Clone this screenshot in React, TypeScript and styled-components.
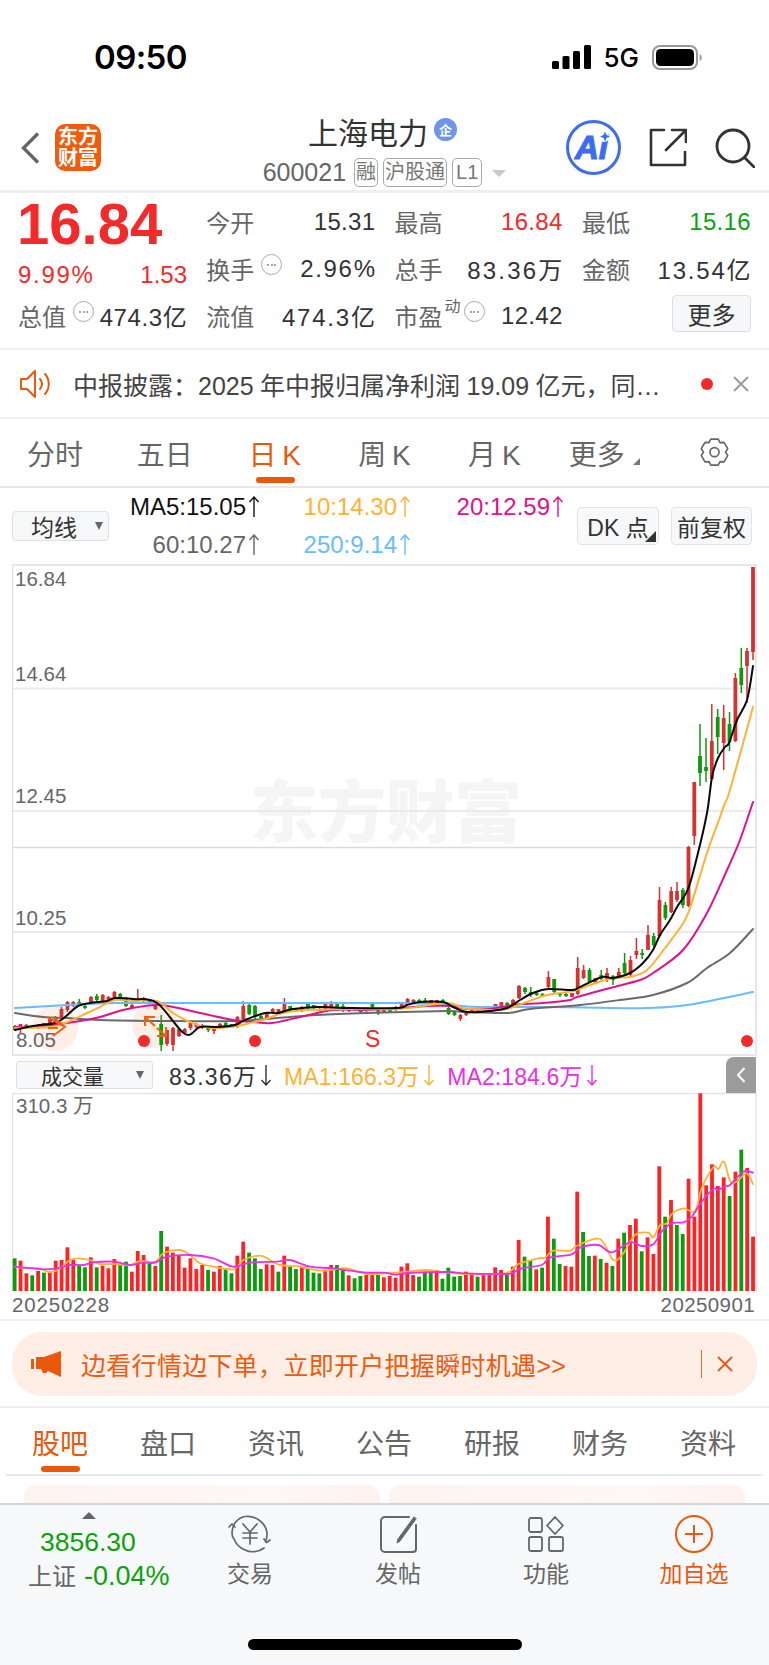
import React from 'react';
import styled, { createGlobalStyle } from 'styled-components';

const FONT = '"Liberation Sans", "Noto Sans CJK SC", sans-serif';
const ORANGE = '#ea580c';
const RED = '#f22a2a';
const GREEN = '#0aa30a';

const Global = createGlobalStyle`
  html, body { margin: 0; padding: 0; background: #fff; }
  * { box-sizing: border-box; }
  #root { width: 769px; height: 1665px; overflow: hidden; }
`;

const Page = styled.div`
  width: 769px; height: 1665px; display: flex; flex-direction: column;
  font-family: ${FONT}; color: #333; background: #fff; overflow: hidden;
`;

const StatusBar = styled.div`
  height: 100px; padding: 14px 67px 0 94px; display: flex; align-items: center; justify-content: space-between; flex: none;
`;
const Clock = styled.div`font: 600 33px Inter, sans-serif; color: #000; letter-spacing: -0.6px;`;
const StatusRight = styled.div`display: flex; align-items: center; gap: 12px;`;
const NetLabel = styled.div`font: 500 26px Inter, sans-serif; color: #000; margin-right: 1px;`;

const Header = styled.div`
  height: 93px; display: grid; grid-template-columns: 1fr auto 1fr; align-items: center; flex: none;
  border-bottom: 3px solid #eeeff1;
`;
const HeaderLeft = styled.div`display: flex; align-items: center; gap: 15px; padding: 5px 0 0 21px;`;
const Logo = styled.div`
  width: 46px; height: 47px; border-radius: 10px; background: #f25a0c; color: #fff;
  font-size: 20px; line-height: 21px; font-weight: 700; display: flex; align-items: center; justify-content: center;
  text-align: center;
`;
const HeaderCenter = styled.div`
  align-self: start; padding-top: 11px; display: flex; flex-direction: column; align-items: center; gap: 6px;
`;
const TitleRow = styled.div`display: flex; align-items: center; gap: 6px; height: 40px; margin-left: -4px;`;
const Title = styled.div`font-size: 30px; color: #333;`;
const EntBadge = styled.div`
  width: 23px; height: 23px; border-radius: 50%; background: #6d95e8; color: #fff; font-size: 13px; font-weight: 700;
  display: flex; align-items: center; justify-content: center; margin-top: -3px;
`;
const SubRow = styled.div`display: flex; align-items: center; gap: 5px; height: 30px;`;
const Code = styled.div`font-size: 25px; color: #666; margin-right: 3px;`;
const Tag = styled.div<{ $wide?: boolean }>`
  height: 29px; padding: 0 ${p => (p.$wide ? 3 : 1)}px; border: 1px solid #a9a9a9; border-radius: 5px; font-size: 20px; color: #777;
  display: flex; align-items: center; justify-content: center; line-height: 1;
`;
const SubCaret = styled.div`
  width: 0; height: 0; margin-left: 5px; margin-top: 3px;
  border-left: 7px solid transparent; border-right: 7px solid transparent; border-top: 7px solid #c8c8c8;
`;
const HeaderRight = styled.div`display: flex; justify-content: flex-end; align-items: center; gap: 28px; padding: 5px 14px 0 0;`;

const Quote = styled.div`
  height: 157px; padding: 5px 0 0 18px; display: grid; grid-template-columns: 169px 169px 168px 169px; column-gap: 19.3px; flex: none;
  grid-template-rows: repeat(3, 47px); border-bottom: 2px solid #eeeff1;
`;
const PriceBlock = styled.div`grid-row: span 2; display: flex; flex-direction: column;`;
const Price = styled.div`font-size: 58px; line-height: 52px; font-weight: 700; color: ${RED}; margin-left: -1px;`;
const ChangeRow = styled.div`
  display: flex; justify-content: space-between; margin-top: 10px; height: 30px; line-height: 30px;
  font-size: 24px; color: ${RED};
`;
const Stat = styled.div`display: flex; justify-content: space-between; align-items: center; white-space: nowrap;`;
const StatLabel = styled.div`font-size: 24px; color: #666; display: flex; align-items: flex-start; position: relative;`;
const StatValue = styled.div<{ $color?: string }>`font-size: 24px; letter-spacing: 0.3px; color: ${p => p.$color || '#333'};`;
const Digits = styled.span<{ $s: number }>`letter-spacing: ${p => p.$s}px;`;
const Sup = styled.span`font-size: 16px; color: #666; line-height: 16px; margin-top: 1px; margin-left: 2px;`;
const DotsCircle = styled.span<{ $ml?: number }>`
  width: 21px; height: 21px; border: 1.5px solid #aaa; border-radius: 50%; display: inline-flex; align-items: center;
  justify-content: center; gap: 1.5px; margin: 3px 0 0 ${p => p.$ml ?? 7}px;
  i { width: 2px; height: 2px; background: #888; border-radius: 50%; display: block; }
`;
const MoreCell = styled.div`display: flex; justify-content: flex-end; align-items: center;`;
const MoreBtn = styled.div`
  width: 79px; height: 37px; margin-top: -5px; background: #f6f7f9; border: 1px solid #dedfe3; border-radius: 4px;
  font-size: 24px; color: #333; display: flex; align-items: center; justify-content: center;
`;

const Notice = styled.div`
  height: 69px; padding: 0 20px; display: flex; align-items: center; border-bottom: 2px solid #eeeff1; flex: none;
`;
const NoticeText = styled.div`font-size: 25px; word-spacing: -0.5px; color: #444; margin-left: 21px; flex: 1; white-space: pre;`;
const NoticeDot = styled.div`width: 12px; height: 12px; border-radius: 50%; background: ${RED}; margin-right: 20px;`;

const Periods = styled.div`
  height: 69px; display: grid; grid-template-columns: repeat(7, 1fr); border-bottom: 2px solid #e6e7ea; flex: none;
`;
const Period = styled.div<{ $active?: boolean }>`
  position: relative; display: flex; align-items: center; justify-content: center; padding-top: 1px;
  font-size: 28px; word-spacing: -2px; white-space: pre; color: ${p => (p.$active ? ORANGE : '#666')};
  ${p => p.$active && `&::after { content: ''; position: absolute; left: 36px; bottom: 3px; width: 39px; height: 6px; border-radius: 3px; background: ${ORANGE}; }`}
`;
const CornerMark = styled.span`
  width: 0; height: 0; margin: 17px 0 0 8px; border-left: 7px solid transparent; border-bottom: 7px solid #777;
`;

const MaBar = styled.div`height: 76px; padding-left: 12px; display: flex; align-items: center; flex: none;`;
const SelectBox = styled.div<{ $w: number }>`
  width: ${p => p.$w}px; height: 30px; background: #f7f8fa; border: 1px solid #dfe0e4; border-radius: 4px;
  display: flex; align-items: center; justify-content: space-between; padding: 0 5px 0 18px; color: #333; font-size: 23px;
`;
const Caret = styled.span`
  width: 0; height: 0; border-left: 4.5px solid transparent; border-right: 4.5px solid transparent; border-top: 8px solid #666;
`;
const MaGrid = styled.div`
  display: grid; grid-template-columns: 151px 151px 153px; grid-auto-rows: 38px; align-items: center; justify-items: end;
  margin-right: 13px;
`;
const MaItem = styled.div<{ $color: string }>`
  display: flex; align-items: center; gap: 2px; font-size: 24px; color: ${p => p.$color}; white-space: nowrap;
`;
const ToolBtn = styled.div<{ $w: number }>`
  position: relative; width: ${p => p.$w}px; height: 38px; background: #f7f8fa; border: 1px solid #e2e3e6; border-radius: 4px; margin-right: 12px;
  font-size: 23px; color: #333; display: flex; align-items: center; justify-content: center; white-space: nowrap;
`;
const BtnCorner = styled.span`
  position: absolute; right: 2px; bottom: 2px; width: 0; height: 0;
  border-left: 11px solid transparent; border-bottom: 11px solid #333;
`;

const ChartWrap = styled.div`margin-left: 12px; width: 745px; height: 492px; flex: none;`;
const ChartSvg = styled.svg`display: block;`;
const VolBar = styled.div`
  position: relative; height: 37px; padding-left: 16px; display: flex; align-items: center; gap: 16px; flex: none;
`;
const VolSelect = styled(SelectBox)`padding: 0 8px 0 24px; height: 28px; font-size: 21px; border-radius: 3px;`;
const VolItem = styled(MaItem)`gap: 4px; margin-right: -4px; font-size: 23px;`;
const Handle = styled.div`
  position: absolute; right: 13px; top: 1px; width: 30px; height: 36px; background: #9b9b9b; border-radius: 8px 0 0 0;
  display: flex; align-items: center; justify-content: center;
`;
const VolWrap = styled.div`margin-left: 12px; width: 745px; height: 198px; flex: none;`;
const Dates = styled.div`
  height: 30px; padding: 0 14px 0 12px; display: flex; justify-content: space-between; align-items: center;
  font-size: 20.5px; color: #666; letter-spacing: 0.85px; border-bottom: 2px solid #eeeff1; flex: none;
`;
const DateEnd = styled.span`letter-spacing: 0.4px;`;

const AdSection = styled.div`height: 87px; padding: 11px 12px 0; border-bottom: 2px solid #eeeff1; flex: none;`;
const AdBanner = styled.div`
  height: 64px; border-radius: 30px; background: #feeee6; padding: 0 24px 0 19px; display: flex; align-items: center; color: #ee5a0e;
`;
const AdText = styled.div`font-size: 25px; margin-left: 19px; flex: 1; letter-spacing: 0.3px;`;
const AdLine = styled.div`width: 1px; height: 28px; background: #e86a2a; margin-right: 15px;`;

const InfoTabs = styled.div`
  height: 68px; margin: 0 6px; display: grid; grid-template-columns: repeat(7, 108px); border-bottom: 2px solid #e8e9ee; flex: none;
`;
const InfoTab = styled.div<{ $active?: boolean }>`
  position: relative; display: flex; align-items: center; justify-content: center; padding-top: 1px; font-size: 28px;
  color: ${p => (p.$active ? ORANGE : '#666')};
  ${p => p.$active && `&::after { content: ''; position: absolute; left: 35px; bottom: 2px; width: 39px; height: 6px; border-radius: 3px; background: ${ORANGE}; }`}
`;
const Peek = styled.div`height: 27px; padding: 9px 24px 0; display: flex; gap: 9px; overflow: hidden; flex: none;`;
const PeekCard = styled.div`flex: 1; height: 60px; border-radius: 12px; background: linear-gradient(90deg, #fff3ef, #fff8f6 70%, #fff1ee);`;

const BottomBar = styled.div`
  flex: 1; position: relative; background: #f7f8fa; border-top: 2px solid #d4d5d9; display: flex; padding-top: 7px;
`;
const Market = styled.div`width: 176px; padding-left: 28px; display: flex; flex-direction: column; align-items: flex-start; white-space: nowrap;`;
const UpTri = styled.div`
  width: 0; height: 0; margin-left: 54px; border-left: 7px solid transparent; border-right: 7px solid transparent; border-bottom: 7px solid #666;
`;
const MarketPrice = styled.div`font-size: 26.5px; color: ${GREEN}; margin: 8px 0 0 12px; line-height: 30px;`;
const MarketRow = styled.div`font-size: 24px; color: #666; margin-top: 4px; line-height: 30px;`;
const MarketPct = styled.span`font-size: 27px; color: ${GREEN}; margin-left: 8px;`;
const NavItem = styled.div<{ $active?: boolean }>`
  width: 148px; display: flex; flex-direction: column; align-items: center; padding-top: 3px;
  font-size: 23px; color: ${p => (p.$active ? ORANGE : '#666')};
`;
const NavIcon = styled.div`height: 38px; display: flex; align-items: center; justify-content: center; margin-bottom: 2px;`;
const HomeBar = styled.div`
  position: absolute; left: 248px; top: 134px; width: 274px; height: 11px; border-radius: 6px; background: #000;
`;

/* ------------ chart data ---------- */
type C = [number, 'r' | 'g', number, number, number, number];
const candles: C[] = [
  [15,'g',1025,1026,1030,1031],[20.5,'r',1024,1024,1029,1034],[26.4,'r',1024,1025,1028,1029],[32,'g',1025,1026,1028,1029],
  [38,'r',1024,1025,1027,1029],[44,'g',1023,1023,1025,1026],[50,'r',1018,1019,1025,1026],[55.5,'r',1016,1017,1024,1026],
  [61.5,'r',1007,1009,1018,1019],[67.5,'r',1001,1002,1010,1012],[73.3,'r',1001,1002,1006,1007],[79.2,'g',999,1002,1005,1006],
  [85,'g',1005,1006,1008,1009],[91,'r',996,997,1003,1004],[96.8,'g',994,996,1000,1002],[102.7,'r',994,995,1001,1002],
  [108.5,'r',996,997,1001,1002],[114.4,'r',991,992,997,999],[120.2,'g',993,994,998,999],[126,'g',997,998,1006,1007],
  [132,'r',1004,1005,1008,1009],[137.8,'r',989,999,1001,1001],[143.7,'r',997,998,1001,1002],[149.5,'g',999,1000,1003,1004],
  [155.4,'r',1005,1005,1009,1010],[161.2,'g',1015,1024,1045,1051],[167,'r',1030,1030,1044,1046],[173,'r',1027,1028,1045,1051],
  [179,'r',1028,1029,1036,1037],[184.7,'r',1028,1029,1033,1034],[190.5,'r',1022,1023,1028,1030],[196.4,'r',1023,1024,1027,1029],
  [202.3,'r',1024,1025,1027,1029],[208.2,'g',1027,1028,1030,1032],[214,'r',1028,1028,1031,1034],[220,'r',1023,1024,1028,1029],
  [225.7,'g',1021,1023,1026,1027],[231.6,'g',1024,1024,1026,1027],[237.4,'r',1016,1017,1026,1028],[243.3,'r',1001,1006,1019,1020],
  [249.2,'g',1004,1005,1014,1015],[255,'g',1005,1006,1017,1019],[261,'g',1015,1016,1018,1019],[266.8,'r',1012,1013,1018,1019],
  [272.7,'r',1008,1009,1013,1014],[278.5,'r',1009,1009,1013,1014],[284.4,'r',998,1004,1011,1012],[290.2,'g',1006,1006,1010,1011],
  [296,'g',1008,1008,1011,1012],[302,'r',1006,1007,1011,1012],[307.9,'g',1003,1004,1008,1009],[313.7,'g',1005,1005,1008,1009],
  [319.6,'r',1008,1009,1010,1011],[325.4,'r',1003,1004,1010,1011],[331.3,'r',1001,1004,1008,1010],[337.2,'g',1004,1004,1010,1011],
  [343,'g',1004,1006,1010,1012],[349,'r',1009,1009,1011,1012],[354.8,'g',1007,1007,1010,1010],[360.7,'g',1010,1010,1012,1013],
  [366.5,'r',1007,1008,1011,1012],[372.4,'g',1004,1004,1007,1008],[378.2,'g',1010,1010,1013,1015],[384,'r',1010,1010,1012,1013],
  [390,'g',1010,1010,1012,1013],[395.8,'r',1006,1007,1010,1011],[401.7,'r',1002,1004,1008,1009],[407.6,'r',998,999,1003,1004],
  [413.5,'r',999,1000,1003,1004],[419.3,'g',999,1000,1002,1003],[425.2,'g',998,1000,1002,1003],[431,'r',1000,1000,1003,1003],
  [437,'r',1000,1000,1003,1004],[442.8,'g',999,1000,1002,1003],[448.6,'g',1007,1008,1014,1015],[454.5,'g',1012,1012,1015,1016],
  [460.4,'r',1014,1015,1019,1021],[466.2,'r',1012,1012,1015,1016],[472,'r',1008,1009,1011,1012],[478,'g',1009,1009,1011,1011],
  [483.8,'g',1010,1010,1012,1012],[489.7,'r',1010,1010,1012,1012],[495.5,'r',1004,1004,1007,1008],[501.4,'r',1002,1002,1006,1006],
  [507.2,'g',1002,1003,1006,1007],[513,'r',999,1000,1005,1006],[519,'r',985,986,998,999],[525,'g',987,988,992,994],
  [530.8,'g',987,992,995,997],[536.6,'g',991,993,995,996],[542.5,'g',993,994,996,997],[548.4,'r',971,977,987,988],
  [554.2,'g',979,979,992,993],[560,'g',993,993,995,997],[566,'g',993,994,996,997],[572,'r',993,993,997,997],
  [577.7,'r',957,968,994,995],[583.6,'r',965,970,978,979],[589.5,'g',968,970,982,983],[595.4,'r',978,978,983,984],
  [601.2,'g',970,975,979,980],[607,'r',968,973,980,982],[613,'g',975,976,980,985],[618.8,'r',968,972,976,977],
  [624.6,'g',953,963,973,974],[630.5,'r',956,960,975,976],[636.4,'r',938,951,955,959],[642.2,'g',949,953,955,959],
  [648,'r',925,935,950,950],[653.7,'g',933,936,945,947],[659.5,'r',887,900,936,937],[665.4,'g',902,905,918,920],
  [671.2,'r',887,891,912,913],[677,'r',882,891,900,902],[682.9,'g',888,890,905,908],[688.5,'r',846,847,906,907],
  [694.3,'r',782,782,836,845],[700,'g',724,756,773,786],[706,'g',738,767,771,782],[711.8,'r',704,741,779,780],
  [717.7,'g',709,717,737,754],[723.7,'r',705,718,743,770],[729.5,'g',712,724,742,751],[735.4,'r',673,678,741,742],
  [741.3,'g',648,668,685,693],[747,'r',648,651,666,703],[753,'r',567,567,652,660],
];
type P = [number, number];
const smooth = (p: P[]) => {
  let d = `M${p[0][0]} ${p[0][1]}`;
  for (let i = 0; i < p.length - 1; i++) {
    const a = p[Math.max(i - 1, 0)], b = p[i], c = p[i + 1], e = p[Math.min(i + 2, p.length - 1)];
    const c1x = b[0] + (c[0] - a[0]) / 6, c1y = b[1] + (c[1] - a[1]) / 6;
    const c2x = c[0] - (e[0] - b[0]) / 6, c2y = c[1] - (e[1] - b[1]) / 6;
    d += `C${c1x.toFixed(1)} ${c1y.toFixed(1)} ${c2x.toFixed(1)} ${c2y.toFixed(1)} ${c[0].toFixed(1)} ${c[1].toFixed(1)}`;
  }
  return d;
};
const ma5: P[] = [[15,1030],[33,1026],[55,1023],[65,1017],[78,1006],[90,1003],[107,1001],[115,998],[133,999],[157,1003],[185,1034],[200,1027],[217,1027],[235,1025],[245,1020],[265,1013],[278,1013],[293,1009],[317,1007],[350,1008],[397,1008],[407,1005],[420,1002],[443,1002],[453,1007],[467,1012],[490,1011],[507,1008],[520,1000],[533,993],[548,989],[572,990],[580,987],[602,977],[613,978],[630,973],[643,963],[653,950],[660,935],[670,920],[677,907],[688,889],[697,857],[707,813],[712,777],[718,758],[725,747],[729,743],[737,720],[747,700],[753,666]];
const ma10: P[] = [[15,1028],[50,1027],[65,1023],[87,1013],[100,1007],[115,1000],[133,1001],[157,1001],[173,1013],[190,1022],[210,1028],[237,1026],[250,1023],[263,1020],[283,1013],[307,1010],[350,1009],[400,1009],[447,1003],[463,1008],[490,1010],[507,1009],[527,1002],[547,995],[573,991],[590,985],[613,978],[630,977],[647,970],[665,948],[682,925],[690,908],[707,853],[720,817],[725,803],[730,790],[753,707]];
const ma20: P[] = [[15,1027],[33,1027],[67,1023],[100,1017],[123,1010],[155,1005],[173,1007],[200,1013],[233,1020],[253,1022],[272,1023],[300,1017],[333,1010],[367,1010],[400,1008],[427,1006],[450,1006],[467,1009],[490,1009],[513,1005],[543,1003],[570,1000],[577,997],[610,988],[640,980],[653,973],[683,950],[707,913],[727,870],[740,840],[753,802]];
const ma60: P[] = [[15,1013],[43,1017],[67,1018],[100,1020],[167,1021],[233,1021],[277,1018],[317,1015],[367,1013],[447,1011],[463,1012],[507,1013],[530,1009],[580,1005],[620,1000],[653,995],[687,983],[707,968],[730,953],[753,929]];
const ma250: P[] = [[15,1008],[67,1005],[113,1003],[157,1003],[385,1003],[400,1003],[450,1005],[480,1007],[547,1007],[613,1008],[647,1008],[687,1005],[753,992]];

const volL = [98,91,53,47,60,55,58,91,93,131,93,76,71,101,71,76,68,96,78,88,58,120,108,83,75,180,133,115,106,70,98,66,78,63,58,75,68,53,106,148,115,98,66,80,78,58,106,73,66,70,66,55,53,63,78,78,66,47,38,45,48,56,48,41,
 45,40,73,83,48,43,58,55,63,37,70,43,45,58,53,43,48,48,71,63,48,73,153,103,91,65,70,223,157,81,75,73,298,177,105,106,96,85,75,157,175,198,217,119,161,111,374,223,273,198,171,337,223,593,317,380,315,341,285,358,424,369,163];
const volG = new Set([0,3,5,11,12,14,18,19,23,25,33,36,37,40,41,42,45,47,48,50,51,52,55,56,58,59,62,
 69,70,71,73,74,75,76,79,84,87,88,90,92,93,97,98,100,102,104,107,111,113,114,122,124]);

const z5 = (a: P[]): P[] => a.map(([x, y]) => [x / 3, 1090 + y / 3]);
const z6 = (a: P[]): P[] => a.map(([x, y]) => [385 + x / 3, 1090 + y / 3]);
const vm1: P[] = [...z5([[44,530],[80,535],[120,535],[150,547],[180,535],[210,510],[235,505],[270,510],[300,522],[340,522],[390,525],[420,513],[465,515],[490,490],[540,480],[570,495],[600,520],[640,530],[700,538],[730,510],[780,497],[810,510],[840,525],[900,530],[960,542],[1040,535],[1100,552]]),
 ...z6([[0,550],[60,546],[120,540],[180,547],[240,552],[360,550],[400,522],[460,505],[480,503],[505,482],[555,482],[580,465],[645,447],[685,510],[715,490],[750,435],[790,428],[805,442],[825,405],[845,400],[860,372],[895,355],[930,363],[950,295],[985,232],[1000,237],[1017,215],[1035,272],[1055,275],[1085,250],[1104,282]])];
const vm2: P[] = [...z5([[44,530],[100,535],[130,538],[170,535],[210,525],[250,525],[280,517],[340,515],[390,525],[430,518],[465,518],[500,500],[570,495],[640,505],[700,530],[750,518],[830,515],[870,510],[930,530],[1000,535],[1090,547]]),
 ...z6([[0,548],[30,554],[70,549],[190,546],[240,550],[360,552],[385,548],[410,535],[470,525],[495,503],[560,493],[585,473],[640,465],[680,487],[735,457],[770,468],[805,463],[830,425],[860,400],[895,397],[920,381],[950,335],[985,297],[1000,300],[1020,288],[1035,285],[1075,245],[1104,248]])];

/* ------------ drawings ---------- */
const Signal = () => (
  <svg width="39" height="24" viewBox="0 0 39 24" fill="#000">
    <rect x="0" y="16" width="7" height="8" rx="1.5" /><rect x="10.5" y="11" width="7" height="13" rx="1.5" />
    <rect x="21" y="6" width="7" height="18" rx="1.5" /><rect x="32" y="0" width="7" height="24" rx="1.5" />
  </svg>
);
const Battery = () => (
  <svg width="50" height="25" viewBox="0 0 50 25">
    <rect x="1" y="1" width="44" height="23" rx="7" fill="none" stroke="#999" strokeWidth="2" />
    <rect x="4" y="4" width="38" height="17" rx="4.5" fill="#000" />
    <path d="M47.5 9v7c1.5-.5 2.5-2 2.5-3.5S49 9.500 47.500 9z" fill="#aaa" />
  </svg>
);
const Back = () => (
  <svg width="19" height="32" viewBox="0 0 19 32" fill="none" stroke="#666" strokeWidth="3.4"><path d="M17 1.500 2.500 16 17 30.500" /></svg>
);
const AiIcon = () => (
  <svg width="55" height="55" viewBox="0 0 55 55">
    <circle cx="27.500" cy="27.500" r="26" fill="none" stroke="#3c6df0" strokeWidth="3" />
    <text x="9" y="38.500" fontFamily="Liberation Sans" fontWeight="700" fontStyle="italic" fontSize="33" fill="#3c6df0" stroke="#3c6df0" strokeWidth="1.2">Ai</text>
    <circle cx="38" cy="17" r="5" fill="#fff" />
    <path d="M39 11.500l1.500 3.500 3.500 1.500-3.500 1.500-1.500 3.500-1.500-3.500-3.500-1.500 3.500-1.500z" fill="#3c6df0" />
  </svg>
);
const ShareIcon = () => (
  <svg width="38" height="39" viewBox="0 0 38 39" fill="none" stroke="#333" strokeWidth="2.6" strokeLinecap="round" strokeLinejoin="round">
    <path d="M15 2H2v35h34V24" /><path d="M17 22 36 3M23 2h14v12" />
  </svg>
);
const SearchIcon = () => (
  <svg width="40" height="40" viewBox="0 0 40 40" fill="none" stroke="#333" strokeWidth="2.800" strokeLinecap="round">
    <circle cx="18" cy="18" r="16" /><path d="M30 30l9 9" />
  </svg>
);
const Speaker = () => (
  <svg width="32" height="28" viewBox="0 0 32 28" fill="none" stroke={ORANGE} strokeWidth="2">
    <path d="M1 9h6l8-8v26l-8-8H1z" strokeLinejoin="round" /><path d="M20 9c2.500 3 2.500 7 0 10M25 4c5 5.500 5 14.500 0 20" strokeLinecap="round" />
  </svg>
);
const CloseX = ({ size, color, w = 1.8 }: { size: number; color: string; w?: number }) => (
  <svg width={size} height={size} viewBox="0 0 16 16" fill="none" stroke={color} strokeWidth={w}><path d="M1 1l14 14M15 1 1 15" /></svg>
);
const Gear = () => (
  <svg width="33" height="33" viewBox="0 0 24 24" fill="none" stroke="#666" strokeWidth="1.200" strokeLinejoin="round">
    <path d="M9.300 1.500h5.400l1.300 2.600 2.900-.2 2.700 4.600-1.600 2.500 1.600 2.500-2.700 4.600-2.900-.2-1.300 2.600H9.300L8 17.900l-2.900.2-2.700-4.600L4 11 2.400 8.500l2.700-4.600 2.900.2z" />
    <circle cx="12" cy="11" r="3.300" />
  </svg>
);
const Arrow = ({ down, h = 22 }: { down?: boolean; h?: number }) => (
  <svg width="12" height={h} viewBox={`0 0 12 ${h}`} fill="none" stroke="currentColor" strokeWidth="1.400">
    <path d={down ? `M6 1v${h - 2}M1.500 ${h - 6} 6 ${h - 1}l4.500 -5` : `M6 1v${h - 2}M1.500 6 6 1l4.500 5`} />
  </svg>
);
const Megaphone = () => (
  <svg width="31" height="26" viewBox="0 0 31 26" fill={ORANGE}>
    <rect x="0" y="8" width="3" height="10" /><path d="M5 6h8L30 0v26l-13-6-2 2h-3l-2-4H5z" />
  </svg>
);
const TradeIcon = () => (
  <svg width="44" height="38" viewBox="0 0 44 38" fill="none" stroke="#666" strokeWidth="1.700" strokeLinecap="round" strokeLinejoin="round">
    <path d="M17 1.500C9 3 4 10 4 18c0 1.500 1 5 2 6M36 33c-5 4-13 5-19 2-5-2-9-6-11-11" />
    <path d="M18 1.500c10-1 20 7 21 16 .3 3-.2 6-1.500 9" />
    <path d="M1 12l3-3 3 3M36 24l2.500 3.500L42 25" />
    <path d="M15 9l7 8 7-8M22 17v12M15 18h14M15 23h14" />
  </svg>
);
const PostIcon = () => (
  <svg width="38" height="38" viewBox="0 0 38 38" fill="none" stroke="#666" strokeWidth="2" strokeLinecap="round">
    <path d="M30 2H6a4 4 0 0 0-4 4v27a4 4 0 0 0 4 4h28a3 3 0 0 0 3-3V10" />
    <path d="M35 2 19 24l-1 4 3-2L37 4z" fill="#666" stroke="#666" strokeWidth="1" strokeLinejoin="round" />
  </svg>
);
const FuncIcon = () => (
  <svg width="36" height="36" viewBox="0 0 36 36" fill="none" stroke="#666" strokeWidth="1.800" strokeLinejoin="round">
    <rect x="1" y="2" width="13" height="14" rx="2" /><path d="M27 1l8 8.500-8 8.500-8-8.500z" />
    <rect x="1" y="21" width="13" height="14" rx="2" /><rect x="21" y="21" width="14" height="14" rx="2" />
  </svg>
);
const PlusIcon = () => (
  <svg width="38" height="38" viewBox="0 0 38 38" fill="none" stroke={ORANGE} strokeWidth="2">
    <circle cx="19" cy="19" r="18" /><path d="M19 10v18M10 19h18" />
  </svg>
);

const Line = ({ pts, color, w = 2 }: { pts: P[]; color: string; w?: number }) => (
  <path d={smooth(pts)} fill="none" stroke={color} strokeWidth={w} strokeLinejoin="round" strokeLinecap="round" />
);

const KChart = () => (
  <ChartSvg width="745" height="492" viewBox="12 564 745 492" fontFamily="Liberation Sans">
    <text x="250" y="837" fontFamily="Noto Sans CJK SC" fontWeight="900" fontSize="68" fill="#f5f5f5">东方财富</text>
    {[688.5, 811, 932].map(y => <line key={y} x1="12" x2="756" y1={y} y2={y} stroke="#e9eaf0" strokeWidth="2" />)}
    <line x1="12" x2="756" y1="847.500" y2="847.500" stroke="#dcdcdc" strokeWidth="1.500" />
    <rect x="12.500" y="565" width="743.500" height="490" fill="none" stroke="#dfe0e6" strokeWidth="1.500" />
    <circle cx="55" cy="1028" r="23" fill="#fdeee6" /><circle cx="155" cy="1025" r="23" fill="#fdeee6" />
    {candles.map(([x, c, wt, bt, bb, wb], i) => {
      const col = c === 'r' ? '#d53232' : '#0b9b0b';
      return (
        <g key={i}>
          <line x1={x} x2={x} y1={wt} y2={wb} stroke={col} strokeWidth="1.500" />
          <rect x={x - 1.900} y={bt} width="3.800" height={Math.max(bb - bt, 1.500)} fill={col} />
        </g>
      );
    })}
    <Line pts={ma250} color="#66bdff" />
    <Line pts={ma60} color="#6a6a6a" />
    <Line pts={ma20} color="#e0118c" />
    <Line pts={ma10} color="#ffb133" />
    <Line pts={ma5} color="#0a0a0a" />
    <g fill="none" stroke="#f0600f" strokeWidth="2">
      <path d="M47 1017l18 10-12 9M48 1028h10M53 1017l12 10" />
      <path d="M155 1017h-10v9M145 1017l10 9M157 1036h9v-9M157 1028l9 8" />
    </g>
    <circle cx="144" cy="1041" r="6" fill={RED} /><circle cx="255" cy="1041" r="6" fill={RED} /><circle cx="747" cy="1041" r="6" fill={RED} />
    <text x="365" y="1047" fontSize="23" fill={RED}>S</text>
    <g fontSize="20.500" fill="#666">
      <text x="15" y="586">16.84</text><text x="15" y="681">14.64</text><text x="15" y="803">12.45</text>
      <text x="15" y="925">10.25</text><text x="16" y="1047">8.05</text>
    </g>
  </ChartSvg>
);

const VolChart = () => (
  <ChartSvg width="745" height="198" viewBox="12 1093 745 198">
    <rect x="12.500" y="1093.500" width="743.500" height="197.500" fill="none" stroke="#e0e1e6" strokeWidth="1.300" />
    {volL.map((h, i) => (
      <rect key={i} x={14.67 + 5.86 * i - 1.900} y={1291 - h / 3} width="3.800" height={h / 3} fill={volG.has(i) ? '#0a9c0a' : '#fb2323'} />
    ))}
    <Line pts={vm1} color="#ffb133" w={1.800} />
    <Line pts={vm2} color="#e82fe8" w={1.800} />
    <text x="16" y="1113" fontFamily="Liberation Sans, Noto Sans CJK SC" fontSize="20.500" fill="#666">310.3 万</text>
  </ChartSvg>
);

const Dots = ({ ml }: { ml?: number }) => <DotsCircle $ml={ml}><i /><i /><i /></DotsCircle>;

export default function App() {
  return (
    <Page>
      <Global />
      <StatusBar>
        <Clock>09:50</Clock>
        <StatusRight><Signal /><NetLabel>5G</NetLabel><Battery /></StatusRight>
      </StatusBar>
      <Header>
        <HeaderLeft><Back /><Logo>东方<br />财富</Logo></HeaderLeft>
        <HeaderCenter>
          <TitleRow><Title>上海电力</Title><EntBadge>企</EntBadge></TitleRow>
          <SubRow>
            <Code>600021</Code><Tag>融</Tag><Tag>沪股通</Tag><Tag $wide>L1</Tag><SubCaret />
          </SubRow>
        </HeaderCenter>
        <HeaderRight><AiIcon /><ShareIcon /><SearchIcon /></HeaderRight>
      </Header>
      <Quote>
        <PriceBlock>
          <Price>16.84</Price>
          <ChangeRow><span><Digits $s={1.7}>9.99</Digits>%</span><span>1.53</span></ChangeRow>
        </PriceBlock>
        <Stat><StatLabel>今开</StatLabel><StatValue>15.31</StatValue></Stat>
        <Stat><StatLabel>最高</StatLabel><StatValue $color={RED}>16.84</StatValue></Stat>
        <Stat><StatLabel>最低</StatLabel><StatValue $color={GREEN}>15.16</StatValue></Stat>
        <Stat><StatLabel>换手<Dots /></StatLabel><StatValue><Digits $s={1.7}>2.96</Digits>%</StatValue></Stat>
        <Stat><StatLabel>总手</StatLabel><StatValue><Digits $s={2.2}>83.36</Digits>万</StatValue></Stat>
        <Stat><StatLabel>金额</StatLabel><StatValue><Digits $s={1.8}>13.54</Digits>亿</StatValue></Stat>
        <Stat><StatLabel>总值<Dots /></StatLabel><StatValue><Digits $s={0.6}>474.3</Digits>亿</StatValue></Stat>
        <Stat><StatLabel>流值</StatLabel><StatValue><Digits $s={1.8}>474.3</Digits>亿</StatValue></Stat>
        <Stat><StatLabel>市盈<Sup>动</Sup><Dots ml={3} /></StatLabel><StatValue>12.42</StatValue></Stat>
        <MoreCell><MoreBtn>更多</MoreBtn></MoreCell>
      </Quote>
      <Notice>
        <Speaker />
        <NoticeText>中报披露：2025 年中报归属净利润 19.09 亿元，同…</NoticeText>
        <NoticeDot />
        <CloseX size={16} color="#999" />
      </Notice>
      <Periods>
        <Period>分时</Period>
        <Period>五日</Period>
        <Period $active>日 K</Period>
        <Period>周 K</Period>
        <Period>月 K</Period>
        <Period>更多<CornerMark /></Period>
        <Period><Gear /></Period>
      </Periods>
      <MaBar>
        <SelectBox $w={97}>均线<Caret /></SelectBox>
        <MaGrid>
          <MaItem $color="#111">MA5:15.05<Arrow /></MaItem>
          <MaItem $color="#ffb133">10:14.30<Arrow /></MaItem>
          <MaItem $color="#e0118c">20:12.59<Arrow /></MaItem>
          <MaItem $color="#666">60:10.27<Arrow /></MaItem>
          <MaItem $color="#66bdff">250:9.14<Arrow /></MaItem>
        </MaGrid>
        <ToolBtn $w={82}>DK 点<BtnCorner /></ToolBtn>
        <ToolBtn $w={81}>前复权</ToolBtn>
      </MaBar>
      <ChartWrap><KChart /></ChartWrap>
      <VolBar>
        <VolSelect $w={137}>成交量<Caret /></VolSelect>
        <VolItem $color="#333"><span><Digits $s={1.3}>83.36</Digits>万</span><Arrow down /></VolItem>
        <VolItem $color="#ffb133"><span><Digits $s={0.1}>MA1:166.3</Digits>万</span><Arrow down /></VolItem>
        <VolItem $color="#e82fe8"><span><Digits $s={0.1}>MA2:184.6</Digits>万</span><Arrow down /></VolItem>
        <Handle>
          <svg width="10" height="16" viewBox="0 0 10 16" fill="none" stroke="#fff" strokeWidth="2"><path d="M8.500 1 2 8l6.500 7" /></svg>
        </Handle>
      </VolBar>
      <VolWrap><VolChart /></VolWrap>
      <Dates><span>20250228</span><DateEnd>20250901</DateEnd></Dates>
      <AdSection>
        <AdBanner>
          <Megaphone />
          <AdText>边看行情边下单，立即开户把握瞬时机遇&gt;&gt;</AdText>
          <AdLine />
          <CloseX size={16} color={ORANGE} />
        </AdBanner>
      </AdSection>
      <InfoTabs>
        <InfoTab $active>股吧</InfoTab><InfoTab>盘口</InfoTab><InfoTab>资讯</InfoTab><InfoTab>公告</InfoTab>
        <InfoTab>研报</InfoTab><InfoTab>财务</InfoTab><InfoTab>资料</InfoTab>
      </InfoTabs>
      <Peek><PeekCard /><PeekCard /></Peek>
      <BottomBar>
        <Market>
          <UpTri />
          <MarketPrice>3856.30</MarketPrice>
          <MarketRow>上证<MarketPct>-0.04%</MarketPct></MarketRow>
        </Market>
        <NavItem><NavIcon><TradeIcon /></NavIcon>交易</NavItem>
        <NavItem><NavIcon><PostIcon /></NavIcon>发帖</NavItem>
        <NavItem><NavIcon><FuncIcon /></NavIcon>功能</NavItem>
        <NavItem $active><NavIcon><PlusIcon /></NavIcon>加自选</NavItem>
        <HomeBar />
      </BottomBar>
    </Page>
  );
}
